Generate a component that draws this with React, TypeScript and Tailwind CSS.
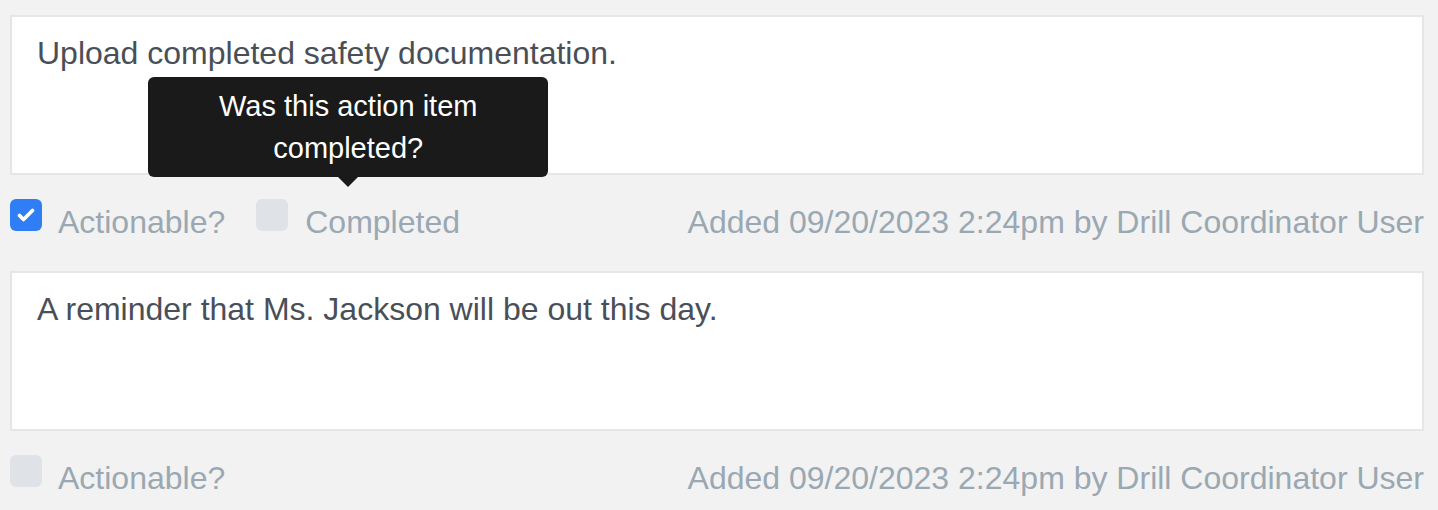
import React from 'react';

interface Note {
  id: number;
  text: string;
  actionable: boolean;
  showTooltip?: boolean;
}

const notes: Note[] = [
  { id: 1, text: 'Upload completed safety documentation.', actionable: true, showTooltip: true },
  { id: 2, text: 'A reminder that Ms. Jackson will be out this day.', actionable: false },
];

function Checkbox({ checked }: { checked: boolean }) {
  return (
    <span
      className={`mt-[1px] flex h-[32px] w-[32px] shrink-0 items-center justify-center rounded-[6px] ${
        checked ? 'bg-[#2f7ef6]' : 'bg-[#dfe3e8]'
      }`}
    >
      {checked && (
        <svg width="18" height="14" viewBox="0 0 18 14" fill="none">
          <path d="M2.5 7.5l4 4 9-9" stroke="white" strokeWidth="3.6" strokeLinecap="round" strokeLinejoin="round" />
        </svg>
      )}
    </span>
  );
}

function Tooltip({ children }: { children: React.ReactNode }) {
  return (
    <div className="absolute bottom-[59px] left-[-108px] z-10 w-[400px]">
      <div className="rounded-[6px] bg-[#1a1a1a] px-[16px] py-[8px] text-center text-[29px] leading-[42px] text-white">
        {children}
      </div>
      <div className="mx-auto h-0 w-0 border-x-[10px] border-t-[10px] border-x-transparent border-t-[#1a1a1a]" />
    </div>
  );
}

export default function App() {
  return (
    <div className="min-h-[510px] bg-[#f2f2f2] pl-[10px] pr-[14px] pt-[15px] font-['Liberation_Sans',Arial,sans-serif]">
      {notes.map(note => (
        <div key={note.id} className="mb-[25px]">
          <div className="h-[160px] border-2 border-[#e6e6e6] bg-white px-[25px] pt-[12px] text-[32px] leading-[48px] text-[#4a4f57]">
            {note.text}
          </div>
          <div className="mt-[23px] flex h-[48px] items-start text-[32px] leading-[48px] text-[#9aa8b2]">
            <label className="flex items-start">
              <Checkbox checked={note.actionable} />
              <span className="ml-[16px]">Actionable?</span>
            </label>
            {note.actionable && (
              <label className="relative ml-[31px] flex items-start">
                {note.showTooltip && (
                  <Tooltip>
                    Was this action item
                    <br />
                    completed?
                  </Tooltip>
                )}
                <Checkbox checked={false} />
                <span className="ml-[17px]">Completed</span>
              </label>
            )}
            <span className="ml-auto">Added 09/20/2023 2:24pm by Drill Coordinator User</span>
          </div>
        </div>
      ))}
    </div>
  );
}
